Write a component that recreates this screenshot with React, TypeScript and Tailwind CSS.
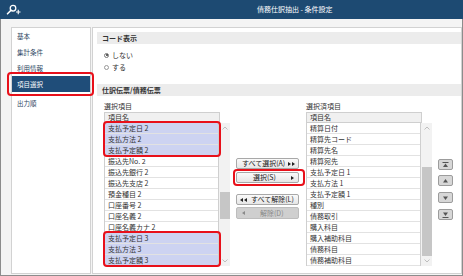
import React from 'react';

type Row = { t: string; h?: boolean };

const leftRows: Row[] = [
  { t: '支払予定日 2', h: true },
  { t: '支払方法 2', h: true },
  { t: '支払予定額 2', h: true },
  { t: '振込先No. 2' },
  { t: '振込先銀行 2' },
  { t: '振込先支店 2' },
  { t: '預金種目 2' },
  { t: '口座番号 2' },
  { t: '口座名義 2' },
  { t: '口座名義カナ 2' },
  { t: '支払予定日 3', h: true },
  { t: '支払方法 3', h: true },
  { t: '支払予定額 3', h: true },
];

const rightRows: Row[] = [
  { t: '精算日付' },
  { t: '精算先コード' },
  { t: '精算先名' },
  { t: '精算宛先' },
  { t: '支払予定日 1' },
  { t: '支払方法 1' },
  { t: '支払予定額 1' },
  { t: '種別' },
  { t: '債務取引' },
  { t: '購入科目' },
  { t: '購入補助科目' },
  { t: '債務科目' },
  { t: '債務補助科目' },
];

function Chevron({ up }: { up?: boolean }) {
  return (
    <svg width="6" height="4" viewBox="0 0 6 4">
      <path d={up ? 'M0.5 3.5 L3 1 L5.5 3.5' : 'M0.5 0.5 L3 3 L5.5 0.5'} fill="none" stroke="#b0b0b0" strokeWidth="0.8" />
    </svg>
  );
}

function Scrollbar({ spacer, thumb }: { spacer: string; thumb: string }) {
  return (
    <div className="w-[11px] bg-[#f2f2f2] flex flex-col">
      <div className="h-[10px] flex items-center justify-center">
        <Chevron up />
      </div>
      <div className="flex-1 flex flex-col items-center">
        <div className={spacer} />
        <div className={`w-[10px] bg-[#c6c6c6] ${thumb}`} />
      </div>
      <div className="h-[10px] flex items-center justify-center">
        <Chevron />
      </div>
    </div>
  );
}

function RedBox({ className }: { className: string }) {
  return <div className={`absolute border-2 border-[#e8101a] rounded-[4px] pointer-events-none ${className}`} />;
}

function ListBox({
  label,
  rows,
  spacer,
  thumb,
  boxes,
}: {
  label: string;
  rows: Row[];
  spacer: string;
  thumb: string;
  boxes?: boolean;
}) {
  return (
    <div className="flex flex-col w-[126px]">
      <div className="h-[12px] leading-[12px] text-[7px] text-[#333]">{label}</div>
      <div className="w-[116px] h-[11px] bg-[#f0f0f0] border border-[#cfcfcf] text-[7px] leading-[9px] pl-[3px] text-[#333]">
        項目名
      </div>
      <div className="flex">
        <div className="relative w-[115px] border-l border-r border-[#cfcfcf] bg-white">
          {rows.map((r, i) => (
            <div
              key={i}
              className={`h-[11px] border-b border-[#e2e2e2] text-[7px] leading-[10px] pl-[3px] text-[#333] whitespace-nowrap ${
                r.h ? 'bg-[#cdd3f1]' : 'bg-white'
              }`}
            >
              {r.t}
            </div>
          ))}
          {boxes && (
            <>
              <RedBox className="left-[-2px] right-[-3px] top-[-2px] h-[36px]" />
              <RedBox className="left-[-2px] right-[-3px] top-[108px] h-[36px]" />
            </>
          )}
        </div>
        <Scrollbar spacer={spacer} thumb={thumb} />
      </div>
    </div>
  );
}

function Tri({ dir, color = '#222' }: { dir: 'r' | 'l'; color?: string }) {
  return (
    <svg width="3" height="4" viewBox="0 0 3 4">
      <path d={dir === 'r' ? 'M0 0 L3 2 L0 4 Z' : 'M3 0 L0 2 L3 4 Z'} fill={color} />
    </svg>
  );
}

function MidButton({ children, className = '', disabled }: { children: React.ReactNode; className?: string; disabled?: boolean }) {
  return (
    <div
      className={`h-[11px] w-[63px] rounded-[2px] border flex items-center text-[7px] ${
        disabled
          ? 'bg-[#cfcfcf] border-[#bdbdbd] text-[#8a8a8a]'
          : 'bg-gradient-to-b from-[#fafafa] to-[#e6e6e6] border-[#a8a8a8] text-[#222]'
      } ${className}`}
    >
      {children}
    </div>
  );
}

function SideButton({ kind, className = '' }: { kind: 'top' | 'up' | 'down' | 'bottom'; className?: string }) {
  return (
    <div className={`w-[15px] h-[11px] rounded-[2px] bg-[#d7d7d7] border border-[#9c9c9c] flex items-center justify-center ${className}`}>
      <svg width="7" height="6" viewBox="0 0 7 6">
        {kind === 'top' && (
          <>
            <rect x="0.5" y="0" width="6" height="1" fill="#555" />
            <path d="M3.5 1.5 L6 5 L1 5 Z" fill="#555" />
          </>
        )}
        {kind === 'up' && <path d="M3.5 1 L6 4.5 L1 4.5 Z" fill="#555" />}
        {kind === 'down' && <path d="M1 1.5 L6 1.5 L3.5 5 Z" fill="#555" />}
        {kind === 'bottom' && (
          <>
            <path d="M1 0.5 L6 0.5 L3.5 4 Z" fill="#555" />
            <rect x="0.5" y="5" width="6" height="1" fill="#555" />
          </>
        )}
      </svg>
    </div>
  );
}

export default function App() {
  return (
    <div className="w-[463px] h-[276px] flex flex-col bg-white font-['Noto_Sans_CJK_JP','Noto_Sans',sans-serif] overflow-hidden">
      {/* title bar */}
      <div className="h-[19px] bg-[#1d4a72] flex items-center shrink-0">
        <svg className="ml-[6px]" width="15" height="12" viewBox="0 0 15 12">
          <circle cx="7" cy="4.2" r="2.8" fill="none" stroke="#fff" strokeWidth="1.3" />
          <path d="M5 6.3 L1.5 9.8" stroke="#fff" strokeWidth="1.6" strokeLinecap="round" />
          <path d="M10 8 H14.5 M12.25 5.75 V10.25" stroke="#fff" strokeWidth="1.1" />
        </svg>
        <div className="ml-[236px] text-[7px] text-white leading-none whitespace-nowrap">債務仕訳抽出 - 条件設定</div>
      </div>

      {/* body */}
      <div className="flex-1 flex bg-[#f4f4f4] border-l border-r border-b border-[#8c8c8c] pt-[8px] pb-[1px]">
        {/* sidebar */}
        <div className="ml-[10px] w-[80px] bg-white border border-[#d2d2d2] flex flex-col text-[6.5px] text-[#2d4662]">
          <div className="h-[16px] leading-[16px] pl-[5px]">基本</div>
          <div className="h-[17px] leading-[17px] pl-[5px]">集計条件</div>
          <div className="h-[15px] leading-[15px] pl-[5px]">利用情報</div>
          <div className="relative h-[16px] leading-[16px] pl-[5px] bg-[#1f4d79] text-white">
            項目選択
            <RedBox className="left-[-5px] right-[-4px] top-[-4px] bottom-[-4px]" />
          </div>
          <div className="mt-[2px] h-[18px] leading-[18px] pl-[5px]">出力順</div>
        </div>

        {/* main */}
        <div className="ml-[1px] w-[370px] bg-white border border-[#d2d2d2] flex flex-col">
          <div className="mt-[4px] ml-[4px] h-[12px] bg-[#ececec] text-[7px] font-bold leading-[12px] pl-[5px] text-[#333]">
            コード表示
          </div>
          <div className="mt-[5px] ml-[11px] flex flex-col text-[7px] text-[#333]">
            <div className="h-[12px] flex items-center gap-[3px]">
              <div className="w-[5px] h-[5px] rounded-full border border-[#777] flex items-center justify-center">
                <div className="w-[2px] h-[2px] rounded-full bg-[#333]" />
              </div>
              <span>しない</span>
            </div>
            <div className="h-[12px] flex items-center gap-[3px]">
              <div className="w-[5px] h-[5px] rounded-full border border-[#999]" />
              <span>する</span>
            </div>
          </div>
          <div className="mt-[11px] ml-[4px] h-[12px] bg-[#ececec] text-[7px] font-bold leading-[12px] pl-[5px] text-[#333]">
            仕訳伝票/債務伝票
          </div>

          <div className="mt-[4px] ml-[11px] flex">
            <ListBox label="選択項目" rows={leftRows} spacer="h-[59px]" thumb="h-[27px]" boxes />

            <div className="ml-[6px] flex flex-col">
              <MidButton className="mt-[58px] pl-[5px] pr-[3px] justify-between">
                <span>すべて選択(A)</span>
                <span className="flex gap-[1px]">
                  <Tri dir="r" />
                  <Tri dir="r" />
                </span>
              </MidButton>
              <div className="relative mt-[3px]">
                <MidButton className="pl-[16px] pr-[4px] justify-between">
                  <span>選択(S)</span>
                  <Tri dir="r" />
                </MidButton>
                <RedBox className="left-[-3px] right-[-6px] top-[-3px] bottom-[-3px]" />
              </div>
              <MidButton className="mt-[11px] pl-[3px] pr-[4px] gap-[4px]">
                <span className="flex gap-[1px]">
                  <Tri dir="l" />
                  <Tri dir="l" />
                </span>
                <span>すべて解除(L)</span>
              </MidButton>
              <MidButton disabled className="mt-[2px] h-[12px] pl-[5px]">
                <Tri dir="l" color="#8a8a8a" />
                <span className="ml-[15px]">解除(D)</span>
              </MidButton>
            </div>

            <div className="ml-[7px]">
              <ListBox label="選択済項目" rows={rightRows} spacer="h-[34px]" thumb="h-[89px]" />
            </div>

            <div className="ml-[6px] flex flex-col">
              <SideButton kind="top" className="mt-[59px]" />
              <SideButton kind="up" className="mt-[5px]" />
              <SideButton kind="down" className="mt-[6px]" />
              <SideButton kind="bottom" className="mt-[6px]" />
            </div>
          </div>
        </div>
      </div>
    </div>
  );
}
